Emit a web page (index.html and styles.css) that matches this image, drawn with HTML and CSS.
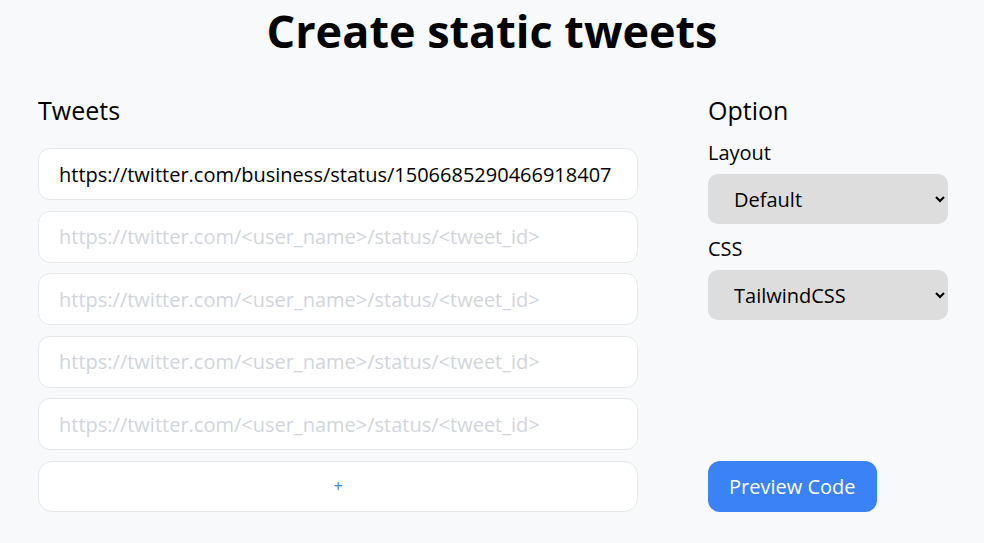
FILE: index.html
```html
<!DOCTYPE html>
<html lang="en">
<head>
    <meta charset="UTF-8">
    <meta name="viewport" content="width=device-width, initial-scale=1.0">
    <title>Create static tweets</title>
    <link rel="stylesheet" href="styles.css">
</head>
<body>
    <h1 class="title">Create static tweets</h1>
    <div class="container">
        <div class="tweets">
            <h2>Tweets</h2>
            <div class="tweet-list">
                <input type="text" value="https://twitter.com/business/status/1506685290466918407" placeholder="https://twitter.com/<user_name>/status/<tweet_id>">
                <input type="text" placeholder="https://twitter.com/<user_name>/status/<tweet_id>">
                <input type="text" placeholder="https://twitter.com/<user_name>/status/<tweet_id>">
                <input type="text" placeholder="https://twitter.com/<user_name>/status/<tweet_id>">
                <input type="text" placeholder="https://twitter.com/<user_name>/status/<tweet_id>">
                <button class="add">+</button>
            </div>
        </div>
        <div class="options">
            <h2>Option</h2>
            <label for="layout">Layout</label>
            <select id="layout">
                <option>Default</option>
            </select>
            <label for="css">CSS</label>
            <select id="css">
                <option>TailwindCSS</option>
            </select>
            <button class="preview">Preview Code</button>
        </div>
    </div>
</body>
</html>
```

FILE: styles.css
```css
body {
    font-family: "Open Sans", "Noto Sans", sans-serif;
    margin: 0;
    background: #f8f9fb;
    color: #000;
}

.title {
    margin: 0;
    text-align: center;
    font-size: 45px;
    line-height: 61px;
    font-weight: 700;
}

.container {
    display: flex;
    gap: 70px;
    padding: 0 36px 0 38px;
    margin-top: 27px;
}

h2 {
    margin: 0;
    font-size: 25px;
    font-weight: 400;
    line-height: 44px;
}

.tweets {
    width: 600px;
    flex-shrink: 0;
}

.tweet-list {
    display: flex;
    flex-direction: column;
    gap: 10.6px;
    margin-top: 16px;
}

.tweet-list input {
    height: 52px;
    box-sizing: border-box;
    border: 1px solid #e5e7eb;
    border-radius: 12px;
    background: #fff;
    padding: 0 20px;
    font-family: inherit;
    font-size: 20px;
    color: #000;
    outline: none;
}

.tweet-list input::placeholder {
    color: #d1d5db;
}

.add {
    height: 51px;
    border: 1px solid #e5e7eb;
    border-radius: 14px;
    background: #fff;
    color: #3b82f6;
    font-family: inherit;
    font-size: 16px;
    cursor: pointer;
}

.options {
    width: 240px;
    flex-shrink: 0;
    display: flex;
    flex-direction: column;
}

.options h2 {
    margin-bottom: 7px;
}

.options label {
    font-size: 20px;
    line-height: 28px;
    margin-bottom: 7px;
}

.options select {
    height: 50px;
    border: none;
    border-radius: 10px;
    background: #dddddd;
    padding: 0 22px;
    font-family: inherit;
    font-size: 20px;
    color: #000;
    margin-bottom: 11px;
}

.preview {
    align-self: flex-start;
    margin-top: auto;
    height: 51px;
    padding: 0 21px;
    border: none;
    border-radius: 12px;
    background: #3b82f6;
    color: #fff;
    font-family: inherit;
    font-size: 20px;
    cursor: pointer;
}
```
